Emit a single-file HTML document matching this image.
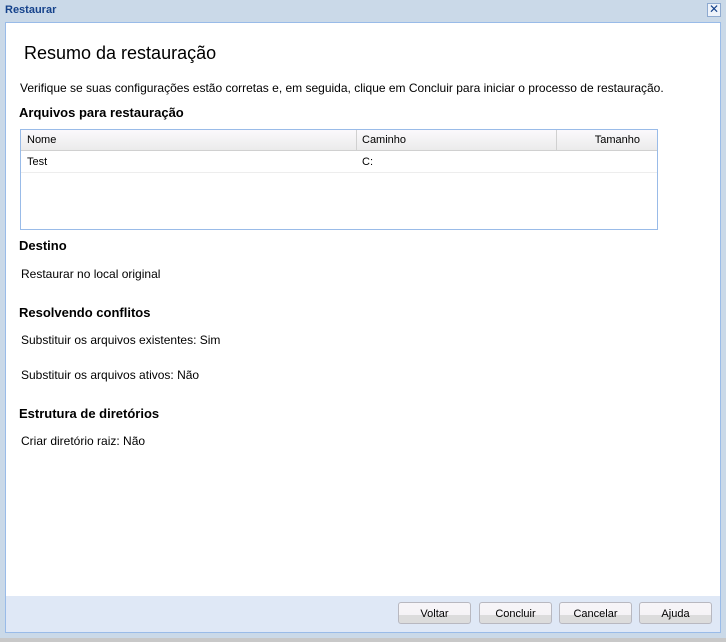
<!DOCTYPE html>
<html><head><meta charset="utf-8"><style>
*{margin:0;padding:0;box-sizing:border-box}
body{width:726px;height:642px;overflow:hidden;background:#c8c8c8;font-family:"Liberation Sans",Tahoma,sans-serif;font-size:12px;color:#000;position:relative}
.frame{position:absolute;left:0;top:0;width:726px;height:638px;background:#cad9e8}
.title{position:absolute;left:5px;top:4px;font-weight:bold;color:#15428b;font-size:11px}
.close{position:absolute;left:707px;top:3px;width:14px;height:14px;border:1px solid #8eaad0;background:#eef3fa;color:#15428b;font-size:12px;line-height:11px;text-align:center}
.inner{position:absolute;left:5px;top:22px;width:716px;height:611px;border:1px solid #99bbe8;background:#fff}
.footer{position:absolute;left:0;bottom:0;width:100%;height:36px;background:#dfe8f6}
.btn{position:absolute;top:6px;width:73px;height:22px;border:1px solid #b8b8c0;border-radius:3px;background:linear-gradient(#f7f5f8 0,#f5f3f6 60%,#dcdcdc 60%,#dcdcdc 100%);text-align:center;line-height:22px;font-size:11px}
.t{position:absolute;white-space:nowrap}
h2{position:absolute;font-size:13px;font-weight:bold;white-space:nowrap}
.tbl{position:absolute;left:14px;top:106px;width:638px;height:101px;border:1px solid #99bbe8}
.th{position:absolute;top:0;height:21px;background:linear-gradient(#fbf9fc,#ebebeb);border-bottom:1px solid #d0d0d0;font-size:11px;line-height:21px}
</style></head><body>
<div class="frame">
<div class="title">Restaurar</div>
<div class="close">✕</div>
<div class="inner">
<div class="t" style="left:18px;top:20px;font-size:18px">Resumo da restauração</div>
<div class="t" style="left:14px;top:58px">Verifique se suas configurações estão corretas e, em seguida, clique em Concluir para iniciar o processo de restauração.</div>
<h2 style="left:13px;top:82px">Arquivos para restauração</h2>
<div class="tbl">
<div class="th" style="left:0;width:336px;border-right:1px solid #d0d0d0;padding-left:6px">Nome</div>
<div class="th" style="left:336px;width:200px;border-right:1px solid #d0d0d0;padding-left:5px">Caminho</div>
<div class="th" style="left:536px;width:100px;text-align:right;padding-right:17px">Tamanho</div>
<div style="position:absolute;left:0;top:21px;width:636px;height:22px;border-bottom:1px solid #ededed;font-size:11px;line-height:22px">
<span class="t" style="left:6px">Test</span><span class="t" style="left:341px">C:</span></div>
</div>
<h2 style="left:13px;top:215px">Destino</h2>
<div class="t" style="left:15px;top:244px">Restaurar no local original</div>
<h2 style="left:13px;top:282px">Resolvendo conflitos</h2>
<div class="t" style="left:15px;top:310px">Substituir os arquivos existentes: Sim</div>
<div class="t" style="left:15px;top:345px">Substituir os arquivos ativos: Não</div>
<h2 style="left:13px;top:383px">Estrutura de diretórios</h2>
<div class="t" style="left:15px;top:411px">Criar diretório raiz: Não</div>
<div class="footer">
<div class="btn" style="left:392px">Voltar</div>
<div class="btn" style="left:473px">Concluir</div>
<div class="btn" style="left:553px">Cancelar</div>
<div class="btn" style="left:633px">Ajuda</div>
</div>
</div>
</div>
</body></html>
